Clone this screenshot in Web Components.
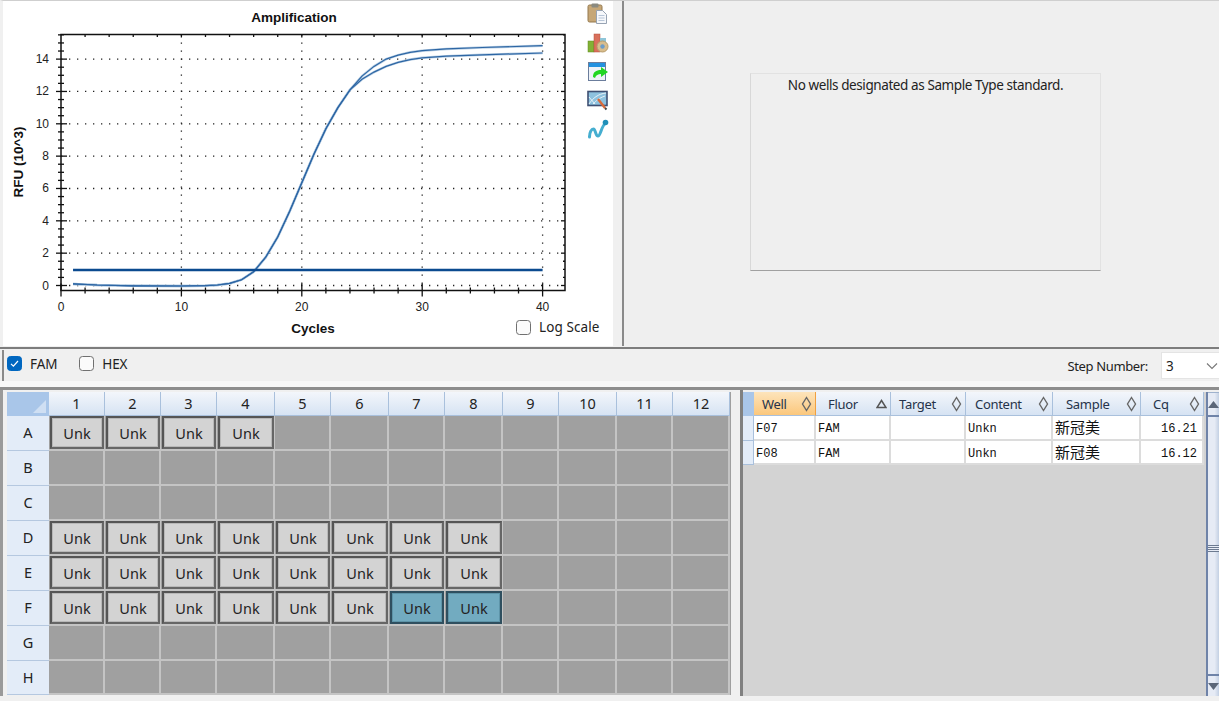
<!DOCTYPE html>
<html>
<head>
<meta charset="utf-8">
<title>Amplification</title>
<style>
  html, body { margin: 0; height: 100%; background: #f0f0f0; overflow: hidden; }
  body { font-family: "Open Sans", "Noto Sans CJK SC", sans-serif; }
</style>
</head>
<body>
<qpcr-app></qpcr-app>
<script>
// small checkbox, label comes through the slot
class CheckBox extends HTMLElement {
  constructor() {
    super();
    this.attachShadow({ mode: 'open' });
  }
  connectedCallback() {
    const on = this.hasAttribute('checked');
    this.shadowRoot.innerHTML = `
      <style>
        :host { display: inline-flex; align-items: center; gap: 8px; font: 13.5px/18px "Noto Sans", sans-serif; color: #222; letter-spacing: -0.1px; }
        .box { width: 13px; height: 13px; border: 1.5px solid #707070; border-radius: 3.5px; background: #fbfbfb; display: flex; }
        .box.on { background: #0067c0; border-color: #0067c0; }
      </style>
      <span class="box ${on ? 'on' : ''}">
        ${on ? '<svg width="13" height="13" viewBox="0 0 13 13"><path d="M3 6.8 5.4 9.2 10 4" fill="none" stroke="#fff" stroke-width="1.2"/></svg>' : ''}
      </span>
      <slot></slot>`;
  }
}
customElements.define('check-box', CheckBox);

// icon column to the right of the chart
class ChartTools extends HTMLElement {
  constructor() {
    super();
    this.attachShadow({ mode: 'open' });
    this.shadowRoot.innerHTML = `
      <style>
        :host { display: flex; flex-direction: column; align-items: center; width: 24px; padding-top: 2px; gap: 8px; }
        svg { width: 22px; height: 21px; display: block; }
      </style>
      <svg viewBox="0 0 22 21">
        <rect x="1" y="2" width="14" height="17" rx="1.5" fill="#c6a777" stroke="#94794f"/>
        <rect x="4.5" y="0.5" width="7" height="4" rx="1" fill="#8a8a80"/>
        <path d="M9.5 7.5h6l4 4v9h-10z" fill="#f6f8fb" stroke="#97a3b3"/>
        <path d="M11.5 12.5h6M11.5 15h6M11.5 17.500h6" stroke="#b8c6d8"/>
      </svg>
      <svg viewBox="0 0 22 21">
        <rect x="1" y="9" width="6" height="11" fill="#82b135" stroke="#5f8a22" stroke-width=".5"/>
        <rect x="7" y="2" width="6" height="18" fill="#d9705c" stroke="#b4513f" stroke-width=".5"/>
        <rect x="13" y="6" width="6" height="8" fill="#8fc5d8"/>
        <circle cx="15.500" cy="14.500" r="5.500" fill="#d9bd8c" stroke="#b79c6b"/>
        <circle cx="15.500" cy="14.500" r="2.200" fill="#6d9cc7"/>
      </svg>
      <svg viewBox="0 0 22 21">
        <rect x="1.500" y="1.500" width="17" height="18" fill="#eef2f7" stroke="#6b7d9c"/>
        <rect x="2" y="2" width="16" height="4" fill="#2392e0"/>
        <path d="M6 16c0-5 3-7 8-7V6l7 5-7 5v-3c-3 0-5 1-6 4z" fill="#22d622"/>
      </svg>
      <svg viewBox="0 0 22 21">
        <rect x="1" y="1.500" width="19" height="14" fill="#8ec2df" stroke="#3f4f72" stroke-width="1.600"/>
        <path d="M2 14C6 8 11 4 19 3M6 14c3-3 6-6 12-8M2 7l6 7" fill="none" stroke="#e6f1f7"/>
        <path d="M11 9l7 9" stroke="#d96a3a" stroke-width="2.400"/>
        <path d="M18 18l1.500 1.500" stroke="#444" stroke-width="2"/>
      </svg>
      <svg viewBox="0 0 22 21">
        <path d="M2.500 18c0-5 2-8 4-8s2 7 4.500 7 3-9 7.500-13" fill="none" stroke="#45aed0" stroke-width="3"/>
        <circle cx="18.500" cy="3.500" r="2.800" fill="#1f8fb8"/>
        <circle cx="2.500" cy="18" r="1.500" fill="#45aed0"/>
      </svg>`;
  }
}
customElements.define('chart-tools', ChartTools);

// amplification plot
class AmpChart extends HTMLElement {
  constructor() {
    super();
    this.attachShadow({ mode: 'open' });
    this._upper = [[1,.1],[3,.03],[6,-.02],[10,-.03],[12,-.01],[13,.03],[14,.13],[15,.36],[16,.85],[17,1.75],[18,3],[19,4.6],[20,6.35],[21,8.1],[22,9.7],[23,11],[24,12.1],[25,12.95],[26,13.55],[27,14],[28,14.25],[29,14.42],[30,14.52],[32,14.63],[35,14.72],[40,14.83]];
    this._lower = this._upper.map(p => p.slice());
    const tail = { 25:12.75, 26:13.2, 27:13.55, 28:13.8, 29:13.97, 30:14.08, 32:14.18, 35:14.27, 40:14.38 };
    this._lower.forEach(p => { if (tail[p[0]] !== undefined) p[1] = tail[p[0]]; });
  }

  connectedCallback() {
    this.render();
  }

  render() {
    const X = c => 61 + c * 12.04;
    const Y = v => 285.5 - v * 16.17;
    const line = pts => pts.map(p => `${X(p[0]).toFixed(1)},${Y(p[1]).toFixed(1)}`).join(' ');
    const left = 61, right = 565, top = 34.5, bottom = 290.5;

    let grid = '', ticks = '', labels = '';
    for (let v = 0; v <= 14; v += 2) {
      grid += `<line class="dot" x1="${left}" x2="${right}" y1="${Y(v)}" y2="${Y(v)}"/>`;
      ticks += `<line x1="${left - 5}" x2="${left + 6}" y1="${Y(v)}" y2="${Y(v)}"/>`;
      ticks += `<line x1="${right - 4}" x2="${right}" y1="${Y(v)}" y2="${Y(v)}"/>`;
      labels += `<text x="49" y="${Y(v) + 4}" text-anchor="end">${v}</text>`;
    }
    for (let v = 0; v <= 15.5; v += 0.5) {
      if (v % 2 === 0) continue;
      ticks += `<line x1="${left - 3}" x2="${left + 3}" y1="${Y(v)}" y2="${Y(v)}"/>`;
      ticks += `<line x1="${right - 2}" x2="${right}" y1="${Y(v)}" y2="${Y(v)}"/>`;
    }
    for (let c = 0; c <= 40; c += 10) {
      if (c > 0) grid += `<line class="dot" x1="${X(c)}" x2="${X(c)}" y1="${top}" y2="${bottom}"/>`;
      ticks += `<line x1="${X(c)}" x2="${X(c)}" y1="${bottom - 7}" y2="${bottom + 6}"/>`;
      labels += `<text x="${X(c)}" y="311" text-anchor="middle">${c}</text>`;
    }
    for (let c = 2; c <= 40; c += 2) {
      if (c % 10 === 0) { ticks += `<line x1="${X(c)}" x2="${X(c)}" y1="${top}" y2="${top + 3}"/>`; continue; }
      ticks += `<line x1="${X(c)}" x2="${X(c)}" y1="${bottom - 3}" y2="${bottom + 3}"/>`;
      ticks += `<line x1="${X(c)}" x2="${X(c)}" y1="${top}" y2="${top + 2.5}"/>`;
    }

    this.shadowRoot.innerHTML = `
      <style>
        :host { display: flex; position: relative; width: 610px; height: 100%; background: #fff; }
        svg.plot { width: 582px; height: 345px; display: block; flex: none; }
        .dot { stroke: #222; stroke-width: 1.3; stroke-dasharray: 1.3 6.7; }
        .ticks line { stroke: #111; stroke-width: 1.300; }
        text { font-family: "Liberation Sans", sans-serif; font-size: 12px; fill: #222; }
        .ttl { font-weight: bold; font-size: 13.500px; fill: #111; }
        .curve { fill: none; stroke: #2d66a4; stroke-width: 1.200; }
        .halo { fill: none; stroke: #b9cfe4; stroke-width: 2.500; }
        chart-tools { margin-left: 1px; }
        .log { position: absolute; left: 513px; top: 317px; letter-spacing: 0.1px; }
      </style>
      <svg class="plot" viewBox="3 1 582 345">
        ${grid}
        <g class="ticks">${ticks}</g>
        <rect x="${left}" y="${top}" width="${right - left}" height="${bottom - top}" fill="none" stroke="#111" stroke-width="1.500"/>
        <polyline class="halo" points="${line(this._upper)}"/>
        <polyline class="halo" points="${line(this._lower)}"/>
        <polyline class="curve" points="${line(this._upper)}"/>
        <polyline class="curve" points="${line(this._lower)}"/>
        <line x1="${X(1)}" x2="${X(40)}" y1="270" y2="270" stroke="#0b4a8f" stroke-width="2.600"/>
        ${labels}
        <text class="ttl" x="294" y="22" text-anchor="middle">Amplification</text>
        <text class="ttl" x="313" y="333" text-anchor="middle">Cycles</text>
        <text class="ttl" transform="translate(23 162) rotate(-90)" text-anchor="middle">RFU (10^3)</text>
      </svg>
      <chart-tools></chart-tools>
      <check-box class="log">Log Scale</check-box>`;
  }
}
customElements.define('amp-chart', AmpChart);

// right hand panel, standard curve placeholder
class StdCurvePanel extends HTMLElement {
  constructor() {
    super();
    this.attachShadow({ mode: 'open' });
    this.shadowRoot.innerHTML = `
      <style>
        :host { display: block; flex: 1; background: #efefef; padding: 72px 0 0 126px; box-sizing: border-box; }
        .box { width: 351px; height: 198px; box-sizing: border-box; border: 1px solid #e2e2e2; border-bottom: 1px solid #a0a0a0; border-left-color: #d8d8d8; text-align: center; font: 13.500px/22px "Noto Sans", sans-serif; color: #222; letter-spacing: -0.41px; }
      </style>
      <div class="box"><slot></slot></div>`;
  }
}
customElements.define('std-curve-panel', StdCurvePanel);

class FluorBar extends HTMLElement {
  constructor() {
    super();
    this.attachShadow({ mode: 'open' });
    this.shadowRoot.innerHTML = `
      <style>
        :host { display: flex; align-items: center; height: 31px; padding: 0 0 0 5px; border-left: 2px solid #8a8a8a; margin-left: 2px; background: #f0f0f0; font: 13.500px "Noto Sans", sans-serif; color: #222; box-sizing: border-box; }
        .channels { display: flex; gap: 22px; margin: 0 0 4px -2px; }
        .step { margin-left: auto; display: flex; align-items: center; gap: 13px; letter-spacing: -0.35px; font-size: 13px; }
        .select { width: 58px; height: 27px; box-sizing: border-box; background: #fff; display: flex; align-items: center; justify-content: space-between; padding: 0 1px 0 4px; border: 1px solid #e4e4e4; border-right: 0; letter-spacing: 0; font-size: 13.500px; }
      </style>
      <div class="channels"><slot></slot></div>
      <div class="step">Step Number:
        <div class="select">3 <svg width="12" height="8" viewBox="0 0 12 8"><path d="M1 1.500 6 6.500 11 1.500" fill="none" stroke="#777" stroke-width="1.100"/></svg></div>
      </div>`;
  }
}
customElements.define('fluor-bar', FluorBar);

// 96 well plate view
class PlateGrid extends HTMLElement {
  constructor() {
    super();
    this.attachShadow({ mode: 'open' });
    this._filled = { A: 4, D: 8, E: 8, F: 8 };
    this._selected = ['F7', 'F8'];
  }

  connectedCallback() {
    const cols = Array.from({ length: 12 }, (_, i) => i + 1);
    const rows = ['A', 'B', 'C', 'D', 'E', 'F', 'G', 'H'];
    const body = rows.map(r => {
      const wells = cols.map(c => {
        if (c > (this._filled[r] || 0)) return '<div class="well"></div>';
        const sel = this._selected.includes(r + c) ? ' sel' : '';
        return `<div class="well"><div class="unk${sel}">Unk</div></div>`;
      }).join('');
      return `<div class="rh">${r}</div>${wells}`;
    }).join('');

    this.shadowRoot.innerHTML = `
      <style>
        :host { display: block; width: 724px; flex: none; font: 14.500px "Noto Sans", sans-serif; color: #222; }
        .grid { display: grid; grid-template-columns: 42px 56px 56px 56px 58px 56px 58px 56px 58px 56px 58px 56px 57px; grid-template-rows: 24px repeat(7, 35px) 34px; background: #a0a0a0; }
        .corner { background: #a9c6e9; position: relative; }
        .corner::after { content: ""; position: absolute; right: 3px; bottom: 3px; border-style: solid; border-width: 0 0 13px 13px; border-color: transparent transparent #cfdff3 transparent; }
        .ch { background: linear-gradient(#f3f6fb, #d6e3f3); border-right: 1px solid #a9c0dc; border-bottom: 1px solid #a9c0dc; display: flex; align-items: center; justify-content: center; box-sizing: border-box; padding-bottom: 1px; }
        .rh { background: #e3ecf8; border-bottom: 1px solid #b5c8e0; display: flex; align-items: center; justify-content: center; box-sizing: border-box; padding-bottom: 2px; }
        .well { border-right: 2px solid #c4c4c4; border-bottom: 2px solid #c4c4c4; box-sizing: border-box; background: #a0a0a0; padding: 0; min-width: 0; }
        .unk { height: 33px; box-sizing: border-box; margin: 0 -1px 0 1px; background: #d3d3d3; border: 2px solid #555; border-right-color: #666; border-bottom-color: #666; outline: 1px solid #b8b8b8; outline-offset: -3px; display: flex; align-items: center; justify-content: center; }
        .unk.sel { background: #72abc0; border-color: #2f4f5f; outline-color: #5d94a8; }
      </style>
      <div class="grid">
        <div class="corner"></div>
        ${cols.map(c => `<div class="ch">${c}</div>`).join('')}
        ${body}
      </div>`;
  }
}
customElements.define('plate-grid', PlateGrid);

// results table next to the plate
class WellTable extends HTMLElement {
  constructor() {
    super();
    this.attachShadow({ mode: 'open' });
    this._cols = [
      { name: 'Well', w: 62, pad: 8, sort: 'none', active: true },
      { name: 'Fluor', w: 75, pad: 12, sort: 'up' },
      { name: 'Target', w: 75, pad: 8, sort: 'none' },
      { name: 'Content', w: 87, pad: 9, sort: 'none' },
      { name: 'Sample', w: 88, pad: 13, sort: 'none' },
      { name: 'Cq', w: 63, pad: 12, sort: 'none' }
    ];
    this._rows = [
      ['F07', 'FAM', '', 'Unkn', '新冠美', '16.21'],
      ['F08', 'FAM', '', 'Unkn', '新冠美', '16.12']
    ];
  }

  sortIcon(sort) {
    if (sort === 'up') return '<svg width="11" height="10" viewBox="0 0 11 10"><path d="M5.500 1.500 10 8.500H1z" fill="none" stroke="#555" stroke-width="1.500"/></svg>';
    return '<svg width="11" height="16" viewBox="0 0 11 16"><path d="M5.500 1.500 9.500 8 5.500 14.500 1.500 8z" fill="none" stroke="#666" stroke-width="1.400"/></svg>';
  }

  connectedCallback() {
    const tmpl = this._cols.map(c => c.w + 'px').join(' ');
    this.shadowRoot.innerHTML = `
      <style>
        :host { display: flex; flex: 1; background: #d3d3d3; min-width: 0; }
        .main { flex: none; width: 462px; padding-top: 0; }
        .row { display: grid; grid-template-columns: 11px ${tmpl}; }
        .head { height: 24px; }
        .gut { background: #a9c6e9; }
        .row.data .gut { background: #e3ecf8; border-right: 1px solid #a9c0dc; border-bottom: 1px solid #a9c0dc; box-sizing: border-box; }
        .hc { background: linear-gradient(#f3f6fb, #d6e3f3); border-right: 1px solid #a9c0dc; border-bottom: 1px solid #a9c0dc; box-sizing: border-box; display: flex; align-items: center; font: 13px "Noto Sans", sans-serif; color: #25334a; letter-spacing: -0.3px; padding-right: 3px; justify-content: space-between; }
        .hc.active { background: linear-gradient(#fde4bb, #fbc77c); border-right-color: #f0a040; }
        .row.data { height: 25px; }
        .row.data + .row.data { height: 24px; }
        .td { background: #fff; border-right: 2px solid #dcdcdc; border-bottom: 2px solid #dcdcdc; box-sizing: border-box; font: 12px/26px "Liberation Mono", "Noto Sans CJK SC", monospace; color: #111; padding-left: 2px; white-space: nowrap; overflow: hidden; }
        .td.cjk { font: 15px/22px "Noto Sans CJK SC", sans-serif; }
        .td.num { text-align: right; padding-right: 5px; }
        .bar { width: 13px; margin-left: 1px; border-left: 2px solid #6f83a8; background: linear-gradient(90deg, #e6ebf5 60%, #c3d0e3); display: flex; flex-direction: column; align-items: center; justify-content: space-between; }
        .btn { width: 100%; display: flex; align-items: center; justify-content: center; }
        .btn.up { height: 25px; border-bottom: 2px solid #6f83a8; border-top: 1px solid #9fb2cd; box-sizing: border-box; }
        .btn.down { height: 22px; border-top: 2px solid #6f83a8; box-sizing: border-box; }
        .grip { width: 11px; height: 7px; margin-top: 6px; background: repeating-linear-gradient(#6c7a90 0 1px, #e6ebf5 1px 2px); }
      </style>
      <div class="main">
        <div class="row head">
          <div class="gut"></div>
          ${this._cols.map(c => `<div class="hc ${c.active ? 'active' : ''}" style="padding-left:${c.pad}px">${c.name}${this.sortIcon(c.sort)}</div>`).join('')}
        </div>
        ${this._rows.map(r => `
          <div class="row data">
            <div class="gut"></div>
            ${r.map((v, i) => `<div class="td ${i === 4 ? 'cjk' : ''} ${i === 5 ? 'num' : ''}">${v}</div>`).join('')}
          </div>`).join('')}
      </div>
      <div class="bar">
        <div class="btn up"><svg width="11" height="7" viewBox="0 0 11 7"><path d="M5.500 0 11 7H0z" fill="#5b6678"/></svg></div>
        <div class="grip"></div>
        <div class="btn down"><svg width="11" height="7" viewBox="0 0 11 7"><path d="M0 0h11L5.500 7z" fill="#5b6678"/></svg></div>
      </div>`;
  }
}
customElements.define('well-table', WellTable);

class QpcrApp extends HTMLElement {
  constructor() {
    super();
    this.attachShadow({ mode: 'open' });
    this.shadowRoot.innerHTML = `
      <style>
        :host { display: flex; flex-direction: column; width: 1219px; height: 701px; overflow: hidden; background: #f0f0f0; }
        .top { display: flex; height: 346px; flex: none; border-top: 1px solid #cfcfcf; border-left: 3px solid transparent; box-shadow: inset 2px 0 #8a8a8a; box-sizing: border-box; background: #f0f0f0; }
        .split { width: 2px; background: #8a8a8a; margin-left: 9px; flex: none; }
        .rule { height: 2px; background: #7d7d7d; flex: none; margin: 1px 0; }
        .gap { height: 6px; flex: none; background: #f8f8f8; }
        .bottom { display: flex; flex: none; height: 309px; border-top: 3px solid #8e8e8e; padding: 2px 0 0 7px; box-sizing: border-box; box-shadow: inset 3px 0 #9a9a9a; }
        .vsplit { width: 3px; background: #808080; margin-left: 9px; flex: none; margin-top: -2px; }
      </style>
      <div class="top">
        <amp-chart></amp-chart>
        <div class="split"></div>
        <std-curve-panel>No wells designated as Sample Type standard.</std-curve-panel>
      </div>
      <div class="rule"></div>
      <fluor-bar>
        <check-box checked>FAM</check-box>
        <check-box>HEX</check-box>
      </fluor-bar>
      <div class="gap"></div>
      <div class="bottom">
        <plate-grid></plate-grid>
        <div class="vsplit"></div>
        <well-table></well-table>
      </div>`;
  }
}
customElements.define('qpcr-app', QpcrApp);
</script>
</body>
</html>
